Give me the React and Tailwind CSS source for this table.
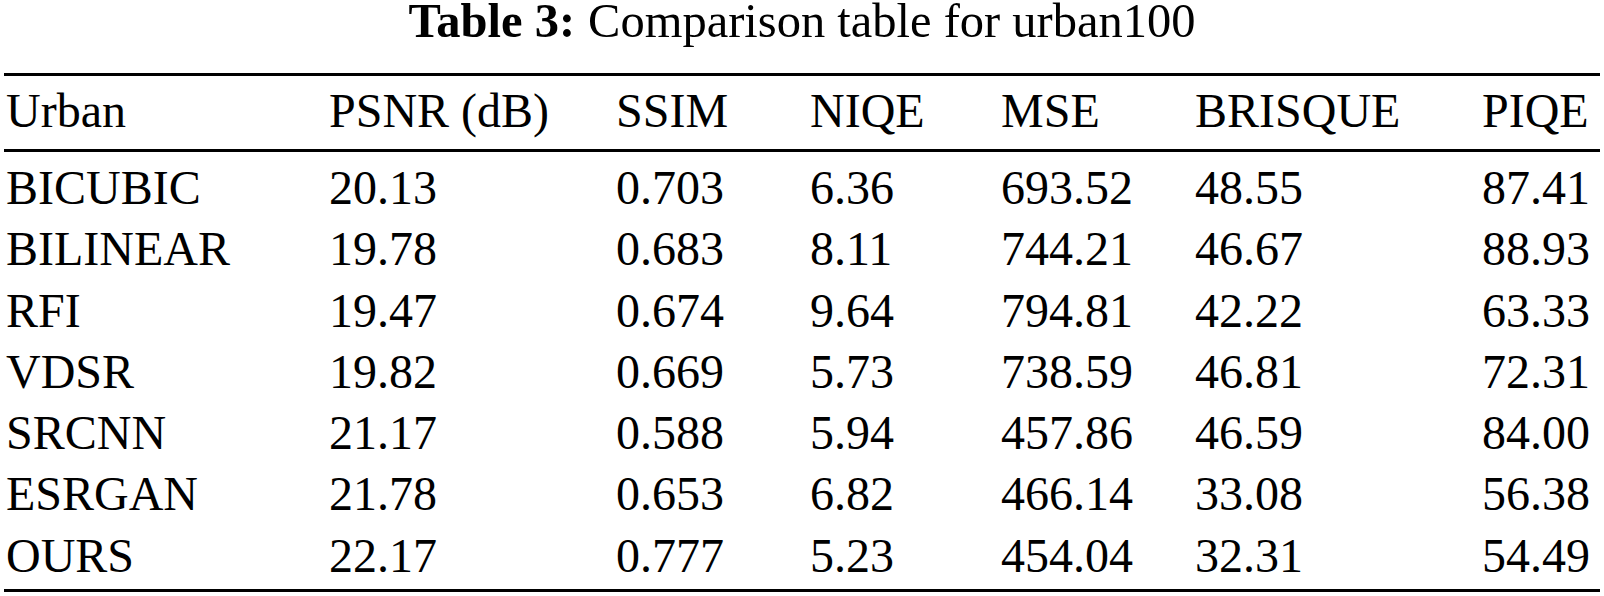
import React from 'react';

const headers = ['Urban', 'PSNR (dB)', 'SSIM', 'NIQE', 'MSE', 'BRISQUE', 'PIQE'];

const rows = [
  ['BICUBIC', '20.13', '0.703', '6.36', '693.52', '48.55', '87.41'],
  ['BILINEAR', '19.78', '0.683', '8.11', '744.21', '46.67', '88.93'],
  ['RFI', '19.47', '0.674', '9.64', '794.81', '42.22', '63.33'],
  ['VDSR', '19.82', '0.669', '5.73', '738.59', '46.81', '72.31'],
  ['SRCNN', '21.17', '0.588', '5.94', '457.86', '46.59', '84.00'],
  ['ESRGAN', '21.78', '0.653', '6.82', '466.14', '33.08', '56.38'],
  ['OURS', '22.17', '0.777', '5.23', '454.04', '32.31', '54.49'],
];

const cols = 'grid grid-cols-[323px_287px_194px_191px_194px_287px_1fr]';

function Row({ cells }) {
  return (
    <div className={`${cols} leading-[61.3px] whitespace-nowrap`}>
      {cells.map((c, i) => (
        <div key={i}>{c}</div>
      ))}
    </div>
  );
}

export default function App() {
  return (
    <div className="w-[1604px] h-[596px] bg-white text-black overflow-hidden font-['Liberation_Serif','Times_New_Roman','DejaVu_Serif',serif]">
      <div className="text-center text-[48.5px] leading-[42px] whitespace-nowrap">
        <span className="font-bold">Table 3:</span>
        <span className="ml-[13px]">Comparison table for urban100</span>
      </div>

      <div className="mx-[4px] mt-[31px] text-[48px]">
        <div className="h-[3px] bg-black" />
        <div className="pl-[2px] pt-[4px] pb-[8px]">
          <div className={`${cols} leading-[61px] whitespace-nowrap`}>
            {headers.map((h) => (
              <div key={h}>{h}</div>
            ))}
          </div>
        </div>
        <div className="h-[3px] bg-black" />
        <div className="pl-[2px] pt-[5px] pb-[3px]">
          {rows.map((r) => (
            <Row key={r[0]} cells={r} />
          ))}
        </div>
        <div className="h-[3px] bg-black" />
      </div>
    </div>
  );
}
